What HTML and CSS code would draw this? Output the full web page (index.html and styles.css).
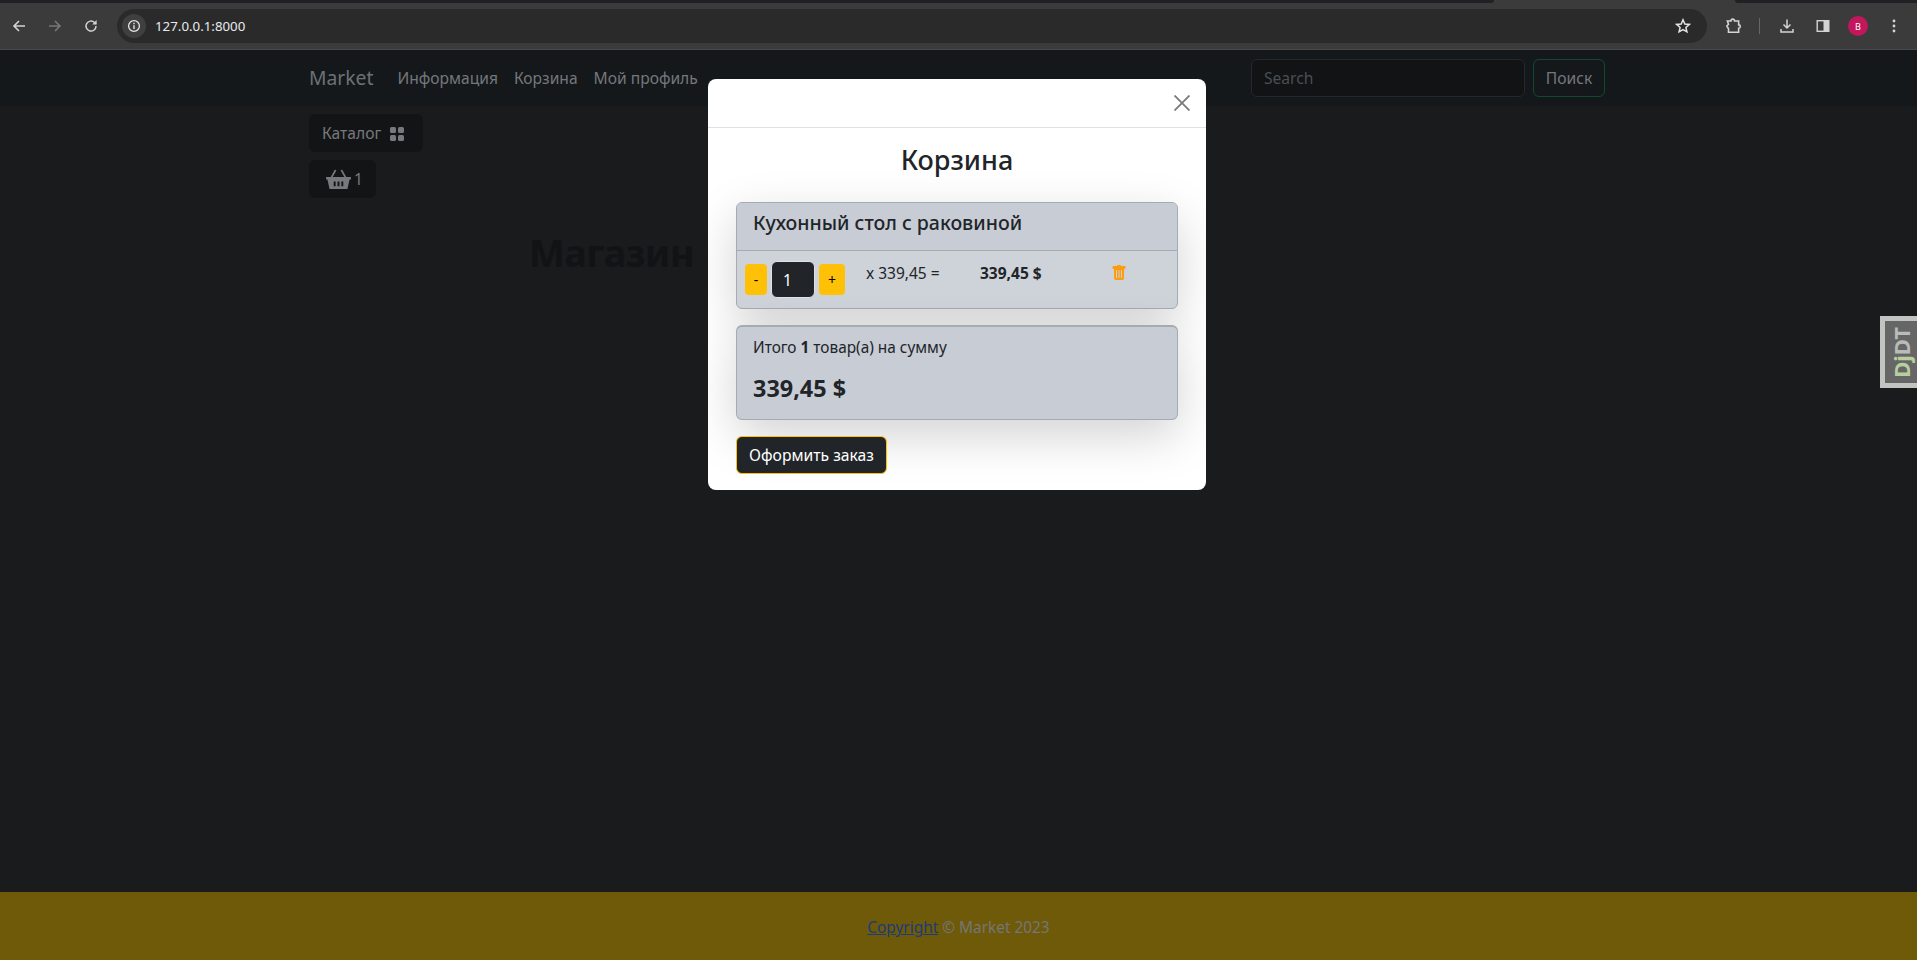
FILE: index.html
```html
<!DOCTYPE html>
<html lang="ru">
<head>
<meta charset="utf-8">
<title>Market</title>
<link rel="stylesheet" href="styles.css">
</head>
<body>
<div class="browser">
  <div class="tabstrip"><div class="strip-a"></div><div class="strip-b"></div></div>
  <div class="toolbar">
    <svg class="tb-icon" viewBox="0 0 16 16"><path d="M14 8H3M8 3 3 8l5 5" fill="none" stroke="#d4d4d4" stroke-width="1.6"/></svg>
    <svg class="tb-icon" viewBox="0 0 16 16"><path d="M2 8h11M8 3l5 5-5 5" fill="none" stroke="#777" stroke-width="1.6"/></svg>
    <svg class="tb-icon" viewBox="0 0 16 16"><path d="M13 8a5 5 0 1 1-1.500-3.500L13 6" fill="none" stroke="#d4d4d4" stroke-width="1.500"/><path d="M13.600 2v4.400H9.200z" fill="#d4d4d4"/></svg>
    <div class="omnibox">
      <span class="site-info"><svg viewBox="0 0 16 16" width="14" height="14"><circle cx="8" cy="8" r="6.200" fill="none" stroke="#e4e4e4" stroke-width="1.500"/><path d="M8 7v4.400M8 4.400v1.500" stroke="#e4e4e4" stroke-width="1.600"/></svg></span>
      <span class="url">127.0.0.1:8000</span>
      <svg class="star" viewBox="0 0 16 16"><path d="m8 1.800 1.800 4.200 4.500.4-3.400 3 1 4.400L8 11.500l-3.900 2.300 1-4.400-3.400-3 4.500-.4z" fill="none" stroke="#e4e4e4" stroke-width="1.500"/></svg>
    </div>
    <svg class="tb-icon ext" viewBox="0 0 16 16"><path d="M3 3.500h3.200a1.600 1.600 0 0 1 3.200 0H13V7a1.400 1.400 0 0 1 0 3v3.500H4V10.500L2.500 8 4 6.500z" fill="none" stroke="#d4d4d4" stroke-width="1.400"/></svg>
    <span class="tb-sep"></span>
    <svg class="tb-icon dl" viewBox="0 0 16 16"><path d="M8 1.500v8M4.500 6.500 8 10l3.500-3.500M2 11v3h12v-3" fill="none" stroke="#d4d4d4" stroke-width="1.500"/></svg>
    <svg class="tb-icon side" viewBox="0 0 16 16"><rect x="2.200" y="2.700" width="11.600" height="10.600" fill="none" stroke="#d4d4d4" stroke-width="1.400"/><rect x="8.500" y="2.700" width="5.300" height="10.600" fill="#d4d4d4"/></svg>
    <span class="avatar">B</span>
    <svg class="tb-icon menu" viewBox="0 0 16 16"><circle cx="8" cy="3" r="1.400" fill="#d4d4d4"/><circle cx="8" cy="8" r="1.400" fill="#d4d4d4"/><circle cx="8" cy="13" r="1.400" fill="#d4d4d4"/></svg>
  </div>
</div>

<div class="page">
  <nav class="navbar">
    <a class="brand">Market</a>
    <a class="nav-link first-link">Информация</a>
    <a class="nav-link">Корзина</a>
    <a class="nav-link">Мой профиль</a>
    <form class="search">
      <input class="search-input" placeholder="Search">
      <button class="search-btn" type="button">Поиск</button>
    </form>
  </nav>
  <main class="content">
    <button class="dark-btn catalog-btn" type="button">Каталог
      <svg viewBox="0 0 16 16" width="16" height="16"><rect x="1" y="1" width="6" height="6" rx="1.500"/><rect x="9" y="1" width="6" height="6" rx="1.500"/><rect x="1" y="9" width="6" height="6" rx="1.500"/><rect x="9" y="9" width="6" height="6" rx="1.500"/></svg>
    </button>
    <button class="dark-btn basket-btn" type="button">
      <svg viewBox="0 0 26 22" width="25" height="21"><path d="M0 8.500h26v2.400h-1.400L22.400 21H3.600L1.400 10.900H0z"/><path d="M5.500 9 10 1M20.500 9 16 1" fill="none" stroke="currentColor" stroke-width="1.800"/><path d="M8 13h2v5H8zM12 13h2v5h-2zM16 13h2v5h-2z" fill="#131416"/></svg>
      1
    </button>
    <h1 class="shop-title">Магазин</h1>
  </main>
  <footer class="footer"><a class="copy-link">Copyright</a> © Market 2023</footer>
</div>

<div class="modal">
  <div class="modal-header">
    <svg class="close" viewBox="0 0 16 16" width="16" height="16"><path d="M.5.500l15 15M15.500.500l-15 15" stroke="#7a7a7a" stroke-width="1.800" fill="none"/></svg>
  </div>
  <div class="modal-body">
    <h2 class="modal-title">Корзина</h2>
    <section class="card">
      <h3 class="card-head">Кухонный стол с раковиной</h3>
      <div class="card-row">
        <button class="qty-btn minus" type="button">-</button>
        <input class="qty-input" value="1">
        <button class="qty-btn plus" type="button">+</button>
        <span class="unit-price">x 339,45 =</span>
        <strong class="line-total">339,45 $</strong>
        <svg class="trash" viewBox="0 0 16 16" width="16" height="18"><path d="M2.500 1a1 1 0 0 0-1 1v1a1 1 0 0 0 1 1H3v9a2 2 0 0 0 2 2h6a2 2 0 0 0 2-2V4h.5a1 1 0 0 0 1-1V2a1 1 0 0 0-1-1H10a1 1 0 0 0-1-1H7a1 1 0 0 0-1 1H2.500zm3 4a.5.5 0 0 1 .5.500v7a.5.5 0 0 1-1 0v-7a.5.5 0 0 1 .5-.5zM8 5a.5.5 0 0 1 .5.500v7a.5.5 0 0 1-1 0v-7A.5.5 0 0 1 8 5zm3 .500v7a.5.5 0 0 1-1 0v-7a.5.5 0 0 1 1 0z"/></svg>
      </div>
    </section>
    <section class="card total-card">
      <p class="total-line">Итого <b>1</b> товар(а) на сумму</p>
      <p class="total-sum">339,45 $</p>
    </section>
    <button class="order-btn" type="button">Оформить заказ</button>
  </div>
</div>

<div class="djdt"><span class="djdt-label"><span class="dj">Dj</span>DT</span></div>
</body>
</html>
```

FILE: styles.css
```css
* { box-sizing: border-box; }
html, body { margin: 0; height: 960px; overflow: hidden; }
body {
  font-family: "Noto Sans", "Liberation Sans", sans-serif;
  font-size: 15.6px;
  background: #191b1d;
  color: #212529;
  display: flex;
  flex-direction: column;
  position: relative;
}
button { font-family: inherit; }

/* browser chrome */
.browser { height: 50px; background: #3b3b3b; border-bottom: 1px solid #4a4a4a; flex: none; }
.tabstrip { height: 3px; display: flex; justify-content: space-between; }
.strip-a { width: 1494px; background: #202124; border-radius: 0 0 8px 0; }
.strip-b { width: 182px; background: #202124; border-radius: 0 0 0 8px; }
.toolbar { height: 46px; display: flex; align-items: center; padding-left: 11px; }
.tb-icon { width: 16px; height: 16px; flex: none; margin-right: 20px; }
.omnibox {
  width: 1590px; height: 34px; margin-left: -2px;
  background: #2a2a2a; border-radius: 17px;
  display: flex; align-items: center; padding: 0 16px 0 5px;
}
.site-info {
  width: 24px; height: 24px; border-radius: 50%; background: #3f3f3f;
  display: flex; align-items: center; justify-content: center;
}
.url { color: #e8eaed; font-size: 13.300px; margin-left: 9px; }
.star { width: 16px; height: 16px; margin-left: auto; }
.tb-icon.ext { width: 18px; height: 18px; margin: 0 17px 0 17px; }
.tb-sep { width: 1px; height: 16px; background: #666; margin-right: 19px; }
.tb-icon.dl { margin-right: 20px; }
.tb-icon.side { margin-right: 17px; }
.avatar {
  width: 20px; height: 20px; border-radius: 50%; background: #c2185b; color: #fff;
  font-size: 9px; display: flex; align-items: center; justify-content: center; margin-right: 18px;
}
.tb-icon.menu { margin-right: 0; }

/* page */
.page { flex: 1; display: flex; flex-direction: column; min-height: 0; }
.navbar {
  height: 56px; flex: none; background: #14181b;
  display: flex; align-items: center; padding: 0 312px 0 309px;
}
.brand { font-size: 19.300px; color: #6d7176; margin-top: -2px; }
.nav-link { color: #74777b; margin-left: 16px; }
.nav-link.first-link { margin-left: 24px; }
.search { display: flex; gap: 8px; margin-left: auto; }
.search-input {
  width: 274px; height: 38px;
  background: #111315; border: 1px solid #24282c; border-radius: 6px;
  padding: 0 12px; font: inherit; color: #555;
}
.search-input::placeholder { color: #4c4f52; }
.search-btn {
  width: 72px; height: 38px;
  background: transparent; border: 1px solid #0f4a2c; border-radius: 6px;
  color: #74777b; font-size: 15.6px; padding: 0;
}
.content { flex: 1; padding: 8px 0 0 309px; display: flex; flex-direction: column; align-items: flex-start; }
.dark-btn {
  height: 38px; background: #131416; border: 0; border-radius: 6px; color: #77797c;
  font-size: 15.6px; display: flex; align-items: center; padding: 0 13px;
}
.dark-btn svg { fill: currentColor; flex: none; }
.catalog-btn { width: 114px; gap: 8px; }
.catalog-btn svg { margin-top: 2px; }
.basket-btn { width: 67px; margin-top: 8px; gap: 3px; padding: 0 0 0 17px; }
.shop-title { margin: 30px 0 0 220px; font-size: 38px; letter-spacing: -.6px; font-weight: 700; color: #121315; line-height: 48px; }
.footer {
  height: 68px; flex: none; background: #6f5a09; color: #747678;
  font-size: 15.4px; line-height: 72px; text-align: center;
}
.copy-link { color: #1a3c78; text-decoration: underline; }

/* modal */
.modal {
  position: absolute; left: 708px; top: 79px; width: 498px; height: 411px;
  background: #fff; border-radius: 8px; overflow: hidden;
}
.modal-header { height: 49px; border-bottom: 1px solid #dee2e6; position: relative; }
.close { position: absolute; right: 16px; top: 16px; }
.modal-body { padding: 0 28px; }
.modal-title { margin: 13px 0 23px; font-size: 27px; line-height: 38px; font-weight: 500; text-align: center; }
.card {
  background: #ced2d9; border: 1px solid #a6abb1; border-radius: 6px;
  box-shadow: 0 16px 48px rgba(0, 0, 0, .175);
}
.card-head {
  margin: 0; height: 48px; background: #c8ccd4; border-bottom: 1px solid #a6abb1;
  border-radius: 5px 5px 0 0; padding: 4px 16px 0; font-size: 19.500px; line-height: 32px; font-weight: 500;
}
.card-row { height: 57px; display: flex; align-items: center; padding-left: 8px; }
.qty-btn {
  height: 31px; background: #ffc107; border: 0; border-radius: 4px; color: #000;
  font-size: 14px; padding: 0; flex: none;
}
.minus { width: 22px; }
.plus { width: 26px; }
.qty-input {
  width: 44px; height: 37px; margin: 0 4px;
  background: #212529; border: 1px solid #dee2e6; border-radius: 6px;
  color: #fff; font: inherit; padding: 0 0 0 11px;
}
.unit-price { margin: -13px 0 0 21px; width: 114px; font-size: 15.500px; }
.line-total { margin-top: -13px; width: 131px; font-size: 15.500px; font-weight: 700; }
.trash { fill: #fd9c0d; margin-top: -13px; flex: none; }
.total-card { margin-top: 16px; height: 95px; background: #c8ccd4; padding: 0 16px; border-top-width: 2px; }
.total-line { margin: 9px 0 0; font-size: 15.400px; line-height: 24px; }
.total-sum { margin: 10px 0 0; font-size: 23.400px; line-height: 36px; font-weight: 700; }
.order-btn {
  margin-top: 16px; width: 151px; height: 38px; background: #212529; color: #fff;
  border: 1px solid #ffc107; border-radius: 6px; font-size: 15.700px; padding: 0;
}

/* debug toolbar tab */
.djdt {
  position: absolute; left: 1880px; top: 316px; width: 37px; height: 72px;
  background: #666; border: 5px solid #c2c4c2; border-right: 0;
  display: flex; align-items: center; justify-content: center;
  font-weight: 700; font-size: 22px; color: #b9bbb9;
}
.djdt-label { writing-mode: vertical-rl; transform: rotate(180deg); line-height: 1; }
.dj { color: #b7cf9f; }
```
